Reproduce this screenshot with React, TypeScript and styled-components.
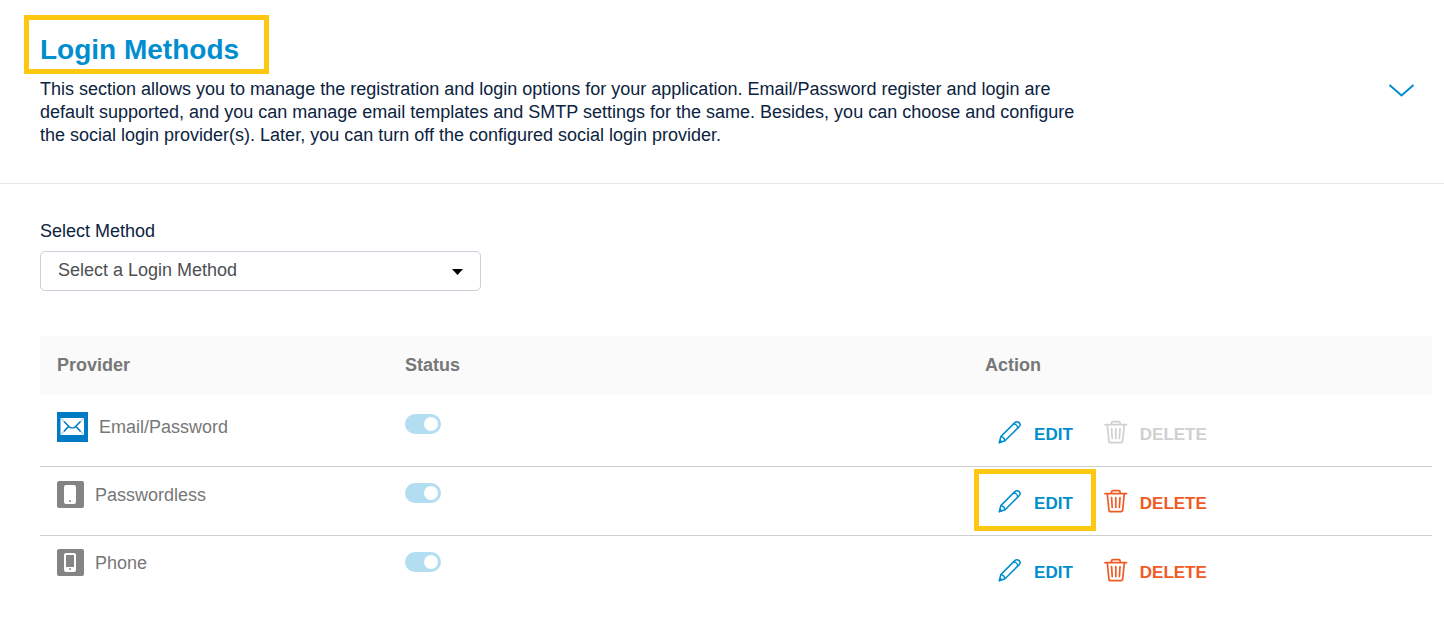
import React from "react";
import styled, { createGlobalStyle, css } from "styled-components";

const color = {
  primary: "#008ecf",
  text: "#0c2340",
  muted: "#777777",
  danger: "#f15a22",
  disabled: "#d0d0d0",
  highlight: "#ffc70f",
};

const GlobalStyle = createGlobalStyle`
  * { box-sizing: border-box; }
  body {
    margin: 0;
    background: #ffffff;
    color: ${color.text};
    font-family: "Liberation Sans", Arial, Helvetica, sans-serif;
    font-size: 18px;
    line-height: 20px;
  }
`;

const highlightFrame = css`
  position: relative;
  &::after {
    content: "";
    position: absolute;
    border: 5px solid ${color.highlight};
    pointer-events: none;
  }
`;

const SectionHeader = styled.header`
  display: flex;
  align-items: center;
  justify-content: space-between;
  padding: 34px 28px 36px 40px;
  border-bottom: 1px solid #e6e6e6;
`;

const Intro = styled.div`
  width: 76%;
`;

const Title = styled.h1`
  ${highlightFrame}
  width: fit-content;
  margin: 0 0 12px;
  color: ${color.primary};
  font-size: 28px;
  line-height: 32px;
  &::after {
    inset: -19px -30px -8px -16px;
  }
`;

const Description = styled.p`
  margin: 0;
  line-height: 23px;
`;

const CollapseButton = styled.button`
  display: flex;
  padding: 0;
  border: 0;
  background: none;
  color: ${color.primary};
  cursor: pointer;
`;

const Content = styled.section`
  padding: 37px 12px 40px 40px;
`;

const Field = styled.div`
  display: flex;
  flex-direction: column;
  gap: 10px;
  width: 441px;
  max-width: 100%;
  margin-bottom: 45px;
`;

const SelectBox = styled.div`
  position: relative;
  display: flex;
`;

const Select = styled.select`
  appearance: none;
  width: 100%;
  height: 40px;
  padding: 0 40px 2px 17px;
  border: 1px solid #ccced9;
  border-radius: 5px;
  background: #ffffff;
  color: #4d4f53;
  font: inherit;
`;

const Caret = styled.svg`
  position: absolute;
  top: 18px;
  right: 18px;
  pointer-events: none;
`;

const Table = styled.table`
  width: 100%;
  table-layout: fixed;
  border-spacing: 0;
  color: ${color.muted};
`;

const HeadCell = styled.th<{ $width: string }>`
  width: ${(p) => p.$width};
  height: 58px;
  padding: 0 17px;
  background: #fafafa;
  text-align: left;
`;

const Cell = styled.td<{ $top: number }>`
  height: 69px;
  padding: ${(p) => p.$top}px 17px 0;
  border-bottom: 1px solid #cfcfcf;
  vertical-align: top;
`;

const Row = styled.tr<{ $lead?: boolean }>`
  ${(p) =>
    p.$lead &&
    css`
      ${Cell} {
        height: 73px;
        border-top: 4px solid transparent;
      }
    `}
  &:last-child ${Cell} {
    border-bottom: 0;
  }
`;

const Provider = styled.div`
  display: flex;
  align-items: center;
  gap: 11px;
`;

const Toggle = styled.input`
  appearance: none;
  display: block;
  position: relative;
  width: 36px;
  height: 20px;
  margin: 0;
  border-radius: 10px;
  background: #d0d0d0;
  &::before {
    content: "";
    position: absolute;
    top: 3px;
    left: 3px;
    width: 14px;
    height: 14px;
    border-radius: 50%;
    background: #ffffff;
  }
  &:checked {
    background: #b3ddf1;
  }
  &:checked::before {
    left: 19px;
  }
`;

const Actions = styled.div`
  display: flex;
  gap: 31px;
  padding-left: 13px;
`;

const ActionButton = styled.button<{ $tone: string; $highlight?: boolean }>`
  display: flex;
  align-items: flex-start;
  gap: 12px;
  height: 24px;
  padding: 0;
  border: 0;
  background: none;
  color: ${(p) => p.$tone};
  font: inherit;
  font-size: 17px;
  font-weight: 700;
  line-height: 20px;
  cursor: pointer;
  &:disabled {
    color: ${color.disabled};
    cursor: default;
  }
  ${(p) =>
    p.$highlight &&
    css`
      ${highlightFrame}
      &::after {
        inset: -20px -23px -18px -24px;
      }
    `}
`;

const ActionLabel = styled.span`
  padding-top: 5px;
`;

const PencilIcon = () => (
  <svg width="24" height="24" viewBox="0 0 24 24" fill="none" stroke="currentColor" strokeWidth="1.5" strokeLinecap="round" strokeLinejoin="round" aria-hidden="true">
    <path d="M2.800 16.600 16.800 2.600c1.300-1.300 3-1.300 4.300 0s1.300 2.900 0 4.200L7 20.800l-5.600 1.800z" />
    <path d="M15.600 4.100c2.200 0 4 1.800 4.100 4" />
    <path d="M3 16.800c2 .2 3.500 1.700 3.800 3.800" />
    <path d="m1.300 22.700.8-2.400 1.600 1.600z" fill="currentColor" />
  </svg>
);

const TrashIcon = () => (
  <svg width="24" height="24" viewBox="0 0 24 24" fill="none" stroke="currentColor" strokeWidth="1.700" strokeLinecap="round" strokeLinejoin="round" aria-hidden="true">
    <path d="M1 4.700h21.500M7.500 4.500V3c0-.8.500-1.300 1.300-1.300h6c.8 0 1.300.5 1.300 1.300v1.500" />
    <path d="M3.300 5 4.900 20.800c.1 1.200.8 1.900 1.900 1.900h10c1.100 0 1.800-.7 1.900-1.900L20.300 5" />
    <path d="m7.600 8.700.6 9.800M11.800 8.700v9.800M16 8.700l-.6 9.800" />
  </svg>
);

const MailIcon = () => (
  <svg width="31" height="30" viewBox="0 0 31 30" aria-hidden="true">
    <path fill="#007ac3" d="M0 0h31v30H0z" />
    <path fill="#ffffff" d="M3.500 6h23.500v17H3.500z" />
    <path d="M4 6.500 11.500 14 4 22.500M26.500 6.500 19 14l7.500 8.500" fill="none" stroke="#a9d3ec" strokeWidth="1.200" />
    <path d="m7 9.500 5.700 5.700q.7.700 1.500.7h2.100q.8 0 1.500-.7l5.700-5.700M11.500 14.500l-4.500 5M19 14.500l4.500 5" fill="none" stroke="#007ac3" strokeWidth="1.400" />
  </svg>
);

const PhoneIcon = ({ outlined }: { outlined?: boolean }) => (
  <svg width="27" height="27" viewBox="0 0 27 27" aria-hidden="true">
    <rect width="27" height="27" rx="2" fill="#848484" />
    <rect x="7" y="4" width="12" height="19" rx="2" fill="#ffffff" />
    {outlined && <rect x="9" y="6" width="8" height="12" fill="#848484" />}
    <circle cx="13" cy="20" r="1" fill="#848484" />
  </svg>
);

const providers = [
  { name: "Email/Password", icon: <MailIcon />, top: 14, locked: true },
  { name: "Passwordless", icon: <PhoneIcon />, top: 14, highlighted: true },
  { name: "Phone", icon: <PhoneIcon outlined />, top: 13 },
];

export default function App() {
  return (
    <main>
      <GlobalStyle />
      <SectionHeader>
        <Intro>
          <Title>Login Methods</Title>
          <Description>
            This section allows you to manage the registration and login options for your application.
            Email/Password register and login are default supported, and you can manage email templates
            and SMTP settings for the same. Besides, you can choose and configure the social login
            provider(s). Later, you can turn off the configured social login provider.
          </Description>
        </Intro>
        <CollapseButton type="button" aria-label="Collapse section">
          <svg width="28" height="16" viewBox="0 0 28 16" fill="none" stroke="currentColor" strokeWidth="2" aria-hidden="true">
            <path d="m1.500 2 12 10.500L25.500 2" />
          </svg>
        </CollapseButton>
      </SectionHeader>

      <Content>
        <Field>
          <label htmlFor="method">Select Method</label>
          <SelectBox>
            <Select id="method" defaultValue="">
              <option value="">Select a Login Method</option>
              {providers.map((p) => (
                <option key={p.name}>{p.name}</option>
              ))}
            </Select>
            <Caret width="11" height="6" viewBox="0 0 11 6" aria-hidden="true">
              <path d="M0 0h11L5.500 6z" fill="#000000" />
            </Caret>
          </SelectBox>
        </Field>

        <Table>
          <thead>
            <tr>
              <HeadCell $width="25%">Provider</HeadCell>
              <HeadCell $width="auto">Status</HeadCell>
              <HeadCell $width="33.33%">Action</HeadCell>
            </tr>
          </thead>
          <tbody>
            {providers.map((p) => (
              <Row key={p.name} $lead={p.locked}>
                <Cell $top={p.top}>
                  <Provider>
                    {p.icon}
                    <span>{p.name}</span>
                  </Provider>
                </Cell>
                <Cell $top={16}>
                  <Toggle type="checkbox" defaultChecked aria-label={`${p.name} status`} />
                </Cell>
                <Cell $top={22}>
                  <Actions>
                    <ActionButton type="button" $tone={color.primary} $highlight={p.highlighted}>
                      <PencilIcon />
                      <ActionLabel>EDIT</ActionLabel>
                    </ActionButton>
                    <ActionButton type="button" $tone={color.danger} disabled={p.locked}>
                      <TrashIcon />
                      <ActionLabel>DELETE</ActionLabel>
                    </ActionButton>
                  </Actions>
                </Cell>
              </Row>
            ))}
          </tbody>
        </Table>
      </Content>
    </main>
  );
}
